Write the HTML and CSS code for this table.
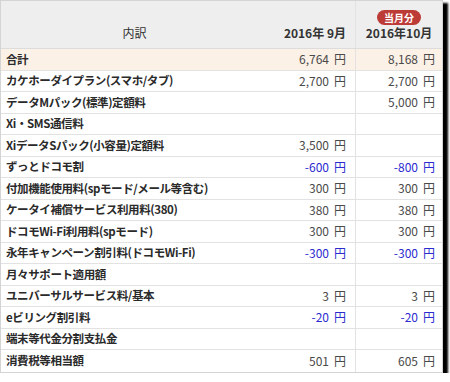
FILE: index.html
```html
<!DOCTYPE html>
<html lang="ja">
<head>
<meta charset="utf-8">
<link rel="stylesheet" href="styles.css">
</head>
<body>
<div class="frame">
  <div class="row head">
    <div class="cell label-h">内訳</div>
    <div class="cell num m9">2016年 9月</div>
    <div class="cell num m10"><span class="badge">当月分</span><span>2016年10月</span></div>
  </div>
  <div class="row total">
    <div class="cell label">合計</div>
    <div class="cell num m9">6,764<span class="yen">円</span></div>
    <div class="cell num m10">8,168<span class="yen">円</span></div>
  </div>
  <div class="row">
    <div class="cell label">カケホーダイプラン(スマホ/タブ)</div>
    <div class="cell num m9">2,700<span class="yen">円</span></div>
    <div class="cell num m10">2,700<span class="yen">円</span></div>
  </div>
  <div class="row">
    <div class="cell label">データMパック(標準)定額料</div>
    <div class="cell num m9"></div>
    <div class="cell num m10">5,000<span class="yen">円</span></div>
  </div>
  <div class="row">
    <div class="cell label">Xi・SMS通信料</div>
    <div class="cell num m9"></div>
    <div class="cell num m10"></div>
  </div>
  <div class="row">
    <div class="cell label">XiデータSパック(小容量)定額料</div>
    <div class="cell num m9">3,500<span class="yen">円</span></div>
    <div class="cell num m10"></div>
  </div>
  <div class="row">
    <div class="cell label">ずっとドコモ割</div>
    <div class="cell num m9 neg">-600<span class="yen">円</span></div>
    <div class="cell num m10 neg">-800<span class="yen">円</span></div>
  </div>
  <div class="row">
    <div class="cell label">付加機能使用料(spモード/メール等含む)</div>
    <div class="cell num m9">300<span class="yen">円</span></div>
    <div class="cell num m10">300<span class="yen">円</span></div>
  </div>
  <div class="row">
    <div class="cell label">ケータイ補償サービス利用料(380)</div>
    <div class="cell num m9">380<span class="yen">円</span></div>
    <div class="cell num m10">380<span class="yen">円</span></div>
  </div>
  <div class="row">
    <div class="cell label">ドコモWi-Fi利用料(spモード)</div>
    <div class="cell num m9">300<span class="yen">円</span></div>
    <div class="cell num m10">300<span class="yen">円</span></div>
  </div>
  <div class="row">
    <div class="cell label">永年キャンペーン割引料(ドコモWi-Fi)</div>
    <div class="cell num m9 neg">-300<span class="yen">円</span></div>
    <div class="cell num m10 neg">-300<span class="yen">円</span></div>
  </div>
  <div class="row">
    <div class="cell label">月々サポート適用額</div>
    <div class="cell num m9"></div>
    <div class="cell num m10"></div>
  </div>
  <div class="row">
    <div class="cell label">ユニバーサルサービス料/基本</div>
    <div class="cell num m9">3<span class="yen">円</span></div>
    <div class="cell num m10">3<span class="yen">円</span></div>
  </div>
  <div class="row">
    <div class="cell label">eビリング割引料</div>
    <div class="cell num m9 neg">-20<span class="yen">円</span></div>
    <div class="cell num m10 neg">-20<span class="yen">円</span></div>
  </div>
  <div class="row">
    <div class="cell label">端末等代金分割支払金</div>
    <div class="cell num m9"></div>
    <div class="cell num m10"></div>
  </div>
  <div class="row last">
    <div class="cell label">消費税等相当額</div>
    <div class="cell num m9">501<span class="yen">円</span></div>
    <div class="cell num m10">605<span class="yen">円</span></div>
  </div>
</div>
</body>
</html>
```
FILE: styles.css
```css
html, body {
  margin: 0;
  padding: 0;
  background: #fff;
}
body {
  font-family: "Noto Sans CJK JP", "Noto Sans", sans-serif;
  font-size: 12px;
  color: #333;
}
.frame {
  width: 443px;
  height: 373px;
  box-sizing: border-box;
  border: 1px solid #d4d4d4;
  box-shadow: 4px 4px 2px 1px #000;
  background: #fff;
  overflow: hidden;
}
.row {
  display: grid;
  grid-template-columns: 267px 87px 1fr;
  height: 21.53px;
  box-sizing: border-box;
  border-bottom: 1px solid #e2e2e2;
}
.row.last {
  border-bottom: none;
}
.row.head {
  height: 48px;
  background: #eeeeee;
  border-bottom: 1px solid #dcdcdc;
}
.row.total {
  background: #fcf1e7;
}
.cell {
  display: flex;
  align-items: center;
  line-height: 1;
  white-space: nowrap;
}
.label {
  padding-left: 5px;
  font-size: 11.5px;
  letter-spacing: -0.4px;
  font-weight: bold;
  color: #2a2a2a;
}
.num {
  justify-content: flex-end;
  color: #4a4a4a;
}
.yen {
  margin-left: 5px;
}
.m9 {
  padding-right: 9px;
}
.m10 {
  padding-right: 7px;
  border-left: 1px solid #e2e2e2;
}
.neg {
  color: #2b2bd0;
}
.head .cell {
  align-items: flex-end;
  padding-bottom: 9px;
  color: #333;
}
.head .label-h {
  justify-content: center;
  font-weight: normal;
}
.head .num {
  font-weight: bold;
}
.head .m10 {
  flex-direction: column;
  align-items: center;
  justify-content: flex-end;
  padding-right: 0;
  gap: 2px;
}
.badge {
  display: inline-block;
  background: #bd3b37;
  color: #fff;
  font-size: 10px;
  font-weight: bold;
  line-height: 15px;
  height: 15px;
  padding: 0 7px;
  border-radius: 8px;
}
```
